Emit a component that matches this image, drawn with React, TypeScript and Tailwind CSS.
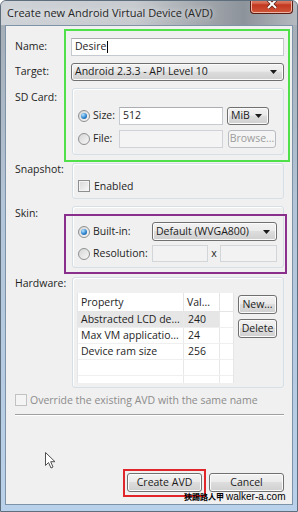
import React from "react";

const font = "font-['Open_Sans','Liberation_Sans',sans-serif]";

const btn =
  "flex items-center whitespace-nowrap rounded-[3px] border border-[#707070] bg-[linear-gradient(180deg,#f2f2f2_0%,#ebebeb_45%,#dddddd_50%,#cfcfcf_100%)] shadow-[inset_0_0_0_1px_#fbfbfb] text-[10.5px] text-[#1b1b1b]";

const group =
  "rounded-[3px] border border-[#d5dfe5] shadow-[inset_1px_1px_0_#ffffff]";

const Arrow = () => (
  <svg width="7" height="4" viewBox="0 0 7 4">
    <path d="M0 0h7L3.5 4z" fill="#1a1a1a" />
  </svg>
);

const Combo = ({ text, className }: { text: string; className: string }) => (
  <div className={`${btn} justify-between pl-[3px] pr-[6px] ${className}`}>
    <span>{text}</span>
    <Arrow />
  </div>
);

const Radio = ({ checked }: { checked?: boolean }) => (
  <span className="flex h-[12px] w-[12px] shrink-0 items-center justify-center rounded-full border border-[#8e8f8f] bg-[linear-gradient(135deg,#d6d6d6,#f7f7f7)]">
    {checked && (
      <span className="h-[6px] w-[6px] rounded-full bg-[radial-gradient(circle_at_35%_30%,#b5e3ff,#2f86d0_55%,#0f4a86)]" />
    )}
  </span>
);

const Check = ({ disabled }: { disabled?: boolean }) => (
  <span
    className={`h-[12px] w-[12px] shrink-0 border ${
      disabled
        ? "border-[#c2c2c2] bg-[#f4f4f4]"
        : "border-[#8e8f8f] bg-[linear-gradient(135deg,#d8d8d8,#f8f8f8)] shadow-[inset_0_0_0_1px_#f4f4f4]"
    }`}
  />
);

const rows = [
  ["Abstracted LCD de...", "240"],
  ["Max VM applicatio...", "24"],
  ["Device ram size", "256"],
  ["", ""],
  ["", ""],
];

export default function App() {
  return (
    <div
      className={`relative flex h-[512px] w-[298px] flex-col overflow-hidden whitespace-nowrap rounded-t-[6px] border border-[#5f6e7d] bg-[linear-gradient(180deg,#a4abb2_0%,#b3c5d8_40%,#b9d1ea_100%)] ${font}`}
    >
      {/* Title bar */}
      <div className="flex h-[24px] shrink-0 items-center justify-between bg-[linear-gradient(90deg,#cfd3d7_0%,#c7cbcf_45%,#9ca2a8_72%,#8d939a_82%,#b5bac0_100%)] pl-[6px] pr-[4px]">
        <span className="text-[11px] text-[#262626] [text-shadow:0_0_6px_#ffffff]">
          Create new Android Virtual Device (AVD)
        </span>
        <div className="-mt-[6px] flex h-[19px] w-[43px] items-center justify-center self-start rounded-b-[4px] border border-t-0 border-[#5a1d14] bg-[linear-gradient(180deg,#e8a292_0%,#d66a52_45%,#c2371f_55%,#d0573a_100%)] shadow-[inset_0_0_0_1px_#f0b4a4]">
          <svg width="12" height="10" viewBox="0 0 12 10">
            <path d="M2 1l8 8M10 1l-8 8" stroke="#5a1d14" strokeWidth="3.4" />
            <path d="M2 1l8 8M10 1l-8 8" stroke="#ffffff" strokeWidth="2" />
          </svg>
        </div>
      </div>

      {/* Content */}
      <div className="mx-[4px] mb-[6px] flex flex-1 flex-col border border-[#7f93a8] bg-[#f0f0f0] pl-[9px] pr-[8px] text-[10.5px] text-[#1e1e1e]">
        {/* Name */}
        <div className="mt-[12px] flex items-center">
          <span className="w-[56px] shrink-0">Name:</span>
          <div className="flex h-[18px] flex-1 items-center border border-[#c5c9d0] border-t-[#abadb3] bg-white pl-[3px]">
            Desire<span className="ml-px h-[12px] w-px bg-black" />
          </div>
        </div>

        {/* Target */}
        <div className="mt-[7px] flex items-center">
          <span className="w-[56px] shrink-0">Target:</span>
          <Combo text="Android 2.3.3 - API Level 10" className="h-[18px] flex-1" />
        </div>

        {/* SD Card */}
        <div className="mt-[7px] flex items-start">
          <span className="mt-[1px] w-[57px] shrink-0 leading-[16px]">SD Card:</span>
          <div className={`${group} flex flex-1 flex-col gap-[5px] pl-[5px] pt-[18px] pb-[6px]`}>
            <div className="flex items-center">
              <div className="flex w-[41px] items-center gap-[3px]">
                <Radio checked />
                <span>Size:</span>
              </div>
              <div className="flex h-[18px] w-[104px] items-center border border-[#c5c9d0] border-t-[#abadb3] bg-white pl-[3px]">
                512
              </div>
              <Combo text="MiB" className="ml-[4px] h-[18px] w-[42px]" />
            </div>
            <div className="flex items-center">
              <div className="flex w-[41px] items-center gap-[3px]">
                <Radio />
                <span>File:</span>
              </div>
              <div className="h-[18px] w-[104px] border border-[#cfd2d6] bg-[#f4f4f4]" />
              <div className="ml-[5px] flex h-[18px] w-[48px] items-center justify-center rounded-[3px] border border-[#b8bcc0] bg-[#f4f4f4] text-[#9c9c9c]">
                Browse...
              </div>
            </div>
          </div>
        </div>

        {/* Snapshot */}
        <div className="mt-[8px] flex items-start">
          <span className="-mt-[2px] w-[57px] shrink-0 leading-[16px]">Snapshot:</span>
          <div className={`${group} flex flex-1 items-center gap-[4px] pl-[5px] pt-[14px] pb-[4px]`}>
            <Check />
            <span className="leading-[16px]">Enabled</span>
          </div>
        </div>

        {/* Skin */}
        <div className="mt-[7px] flex items-start">
          <span className="-mt-[1px] w-[57px] shrink-0 leading-[16px]">Skin:</span>
          <div className={`${group} flex flex-1 flex-col gap-[4px] pl-[5px] pt-[15px] pb-[5px]`}>
            <div className="flex items-center">
              <div className="flex w-[74px] items-center gap-[3px]">
                <Radio checked />
                <span>Built-in:</span>
              </div>
              <Combo text="Default (WVGA800)" className="h-[19px] w-[125px]" />
            </div>
            <div className="flex items-center">
              <div className="flex w-[74px] items-center gap-[3px]">
                <Radio />
                <span>Resolution:</span>
              </div>
              <div className="h-[17px] w-[56px] border border-[#d3d6d9] bg-[#f2f2f2]" />
              <span className="w-[12px] text-center">x</span>
              <div className="h-[17px] w-[57px] border border-[#d3d6d9] bg-[#f2f2f2]" />
            </div>
          </div>
        </div>

        {/* Hardware */}
        <div className="mt-[9px] flex items-start">
          <span className="-mt-[2px] w-[57px] shrink-0 leading-[16px]">Hardware:</span>
          <div className={`${group} flex flex-1 items-start gap-[4px] pl-[4px] pt-[15px] pb-[4px]`}>
            <div className="h-[90px] w-[157px] overflow-hidden border-x border-[#e6e6e6] bg-white">
              <div className="flex h-[19px] border-b border-[#e5e5e5]">
                <span className="w-[106px] border-r border-[#e5e5e5] pl-[3px] leading-[18px]">Property</span>
                <span className="w-[36px] border-r border-[#e5e5e5] pl-[3px] leading-[18px]">Val...</span>
                <span className="flex-1" />
              </div>
              {rows.map(([p, v], i) => (
                <div key={i} className="flex h-[16px]">
                  <div className={`flex w-[142px] border-b border-[#efefef] ${i === 0 ? "bg-[#e6e6e6]" : ""}`}>
                    <span className="w-[106px] overflow-hidden border-r border-[#e8e8e8] pl-[3px] leading-[15px]">{p}</span>
                    <span className="w-[36px] border-r border-[#e8e8e8] pl-[4px] leading-[15px]">{v}</span>
                  </div>
                  <span className="flex-1 border-b border-[#efefef]" />
                </div>
              ))}
            </div>
            <div className="mt-[2px] flex flex-col gap-[5px]">
              <div className={`${btn} h-[19px] w-[39px] justify-center`}>New...</div>
              <div className={`${btn} h-[19px] w-[39px] justify-center`}>Delete</div>
            </div>
          </div>
        </div>

        {/* Override */}
        <div className="mt-[4px] flex items-center gap-[3px]">
          <Check disabled />
          <span className="leading-[16px] text-[#8c8c8c]">Override the existing AVD with the same name</span>
        </div>

        <div className="mt-[6px] h-[2px] border-t border-[#a0a0a0] bg-white" />

        {/* Buttons */}
        <div className="mt-auto mb-[12px] flex justify-end gap-[7px]">
          <div className={`${btn} h-[19px] w-[75px] justify-center border-[#3c7fb1] bg-[linear-gradient(180deg,#eaf6fd_0%,#d9f0fc_45%,#bee6fd_50%,#a7d9f5_100%)]`}>
            Create AVD
          </div>
          <div className={`${btn} h-[19px] w-[75px] justify-center`}>Cancel</div>
        </div>
      </div>

      {/* Cursor */}
      <svg className="absolute left-[44px] top-[451px]" width="12" height="18" viewBox="0 0 12 18">
        <path d="M0.5 0.5V13.5L3.5 10.5L6 16L8 15L5.7 9.7H10Z" fill="#ffffff" stroke="#505050" strokeWidth="1" />
      </svg>

      {/* Annotations */}
      <div className="pointer-events-none absolute left-[63px] top-[28px] h-[133px] w-[226px] border-2 border-[#4fe04a]" />
      <div className="pointer-events-none absolute left-[63px] top-[213px] h-[60px] w-[223px] border-2 border-[#8a2f8c]" />
      <div className="pointer-events-none absolute left-[122px] top-[468px] h-[28px] w-[83px] border-2 border-[#e0262a]" />

      {/* Watermark */}
      <div className="absolute left-[183px] top-[490px] flex items-center gap-[2px] text-[10px] leading-[12px] text-black">
        <span className="font-['Noto_Sans_CJK_TC',sans-serif] text-[8px] font-bold">狹踢路人甲</span>
        <span className="font-['Liberation_Sans',sans-serif]">walker-a.com</span>
      </div>
    </div>
  );
}
